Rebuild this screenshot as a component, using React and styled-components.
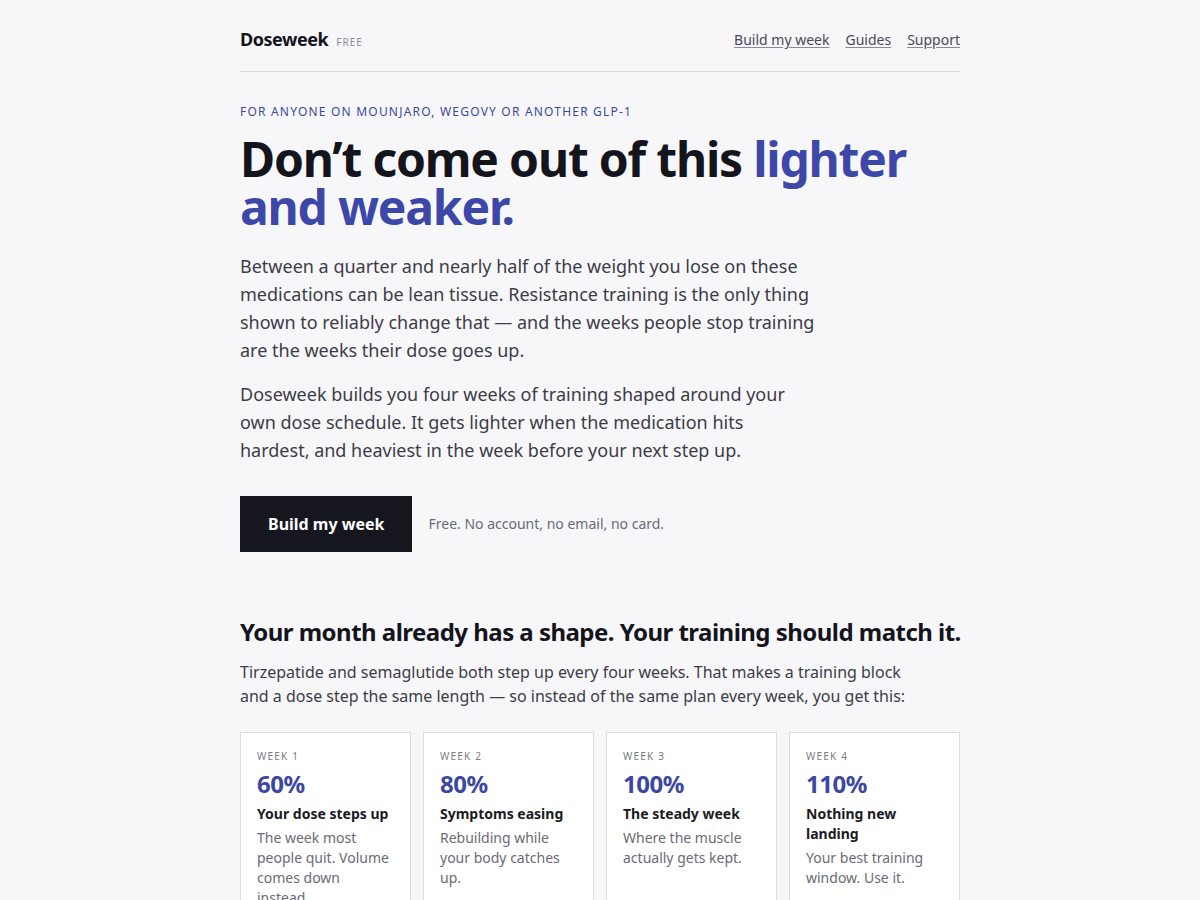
import React from "react";
import styled, { createGlobalStyle } from "styled-components";

const Global = createGlobalStyle`
  * { box-sizing: border-box; }
  html, body { margin: 0; padding: 0; background: #f7f7fa; }
  body { font-family: "Noto Sans", "Open Sans", sans-serif; color: #14151c; -webkit-font-smoothing: antialiased; }
`;

const Page = styled.div`
  width: 720px;
  margin: 0 auto;
`;

const Header = styled.header`
  display: flex;
  align-items: center;
  justify-content: space-between;
  height: 72px;
  padding-top: 6px;
  border-bottom: 1px solid #d8d8dd;
`;

const Brand = styled.div`
  display: flex;
  align-items: baseline;
  gap: 8px;
`;

const Logo = styled.span`
  font-size: 18px;
  font-weight: 700;
  letter-spacing: -0.025em;
  color: #14151c;
`;

const Tag = styled.span`
  font-size: 10px;
  letter-spacing: 0.1em;
  color: #8a8a94;
`;

const Nav = styled.nav`
  display: flex;
  gap: 16px;
  padding-top: 2px;
`;

const NavLink = styled.a`
  font-size: 14px;
  color: #4a4a55;
  text-decoration: underline;
  text-underline-offset: 2px;
  text-decoration-color: #8a8a94;
`;

const Hero = styled.section`
  padding-top: 31px;
`;

const Eyebrow = styled.div`
  font-size: 12px;
  letter-spacing: 0.1em;
  color: #3d47a0;
  line-height: 18px;
  text-transform: uppercase;
`;

const Title = styled.h1`
  margin: 14px 0 0;
  font-size: 48px;
  line-height: 48px;
  font-weight: 700;
  letter-spacing: -0.025em;
  color: #14151c;
`;

const Accent = styled.span`
  color: #3d47a8;
`;

const Lead = styled.p`
  margin: 21px 0 0;
  max-width: 576px;
  font-size: 18px;
  line-height: 28px;
  color: #3c3c46;
  & + & { margin-top: 16px; }
`;

const Cta = styled.div`
  display: flex;
  align-items: center;
  gap: 16px;
  margin-top: 32px;
`;

const Button = styled.a`
  display: inline-flex;
  align-items: center;
  height: 56px;
  padding: 0 28px;
  background: #15161e;
  color: #fff;
  font-size: 16px;
  font-weight: 700;
  text-decoration: none;
`;

const Note = styled.span`
  font-size: 14px;
  color: #6b6b75;
  padding-bottom: 2px;
`;

const Section = styled.section`
  margin-top: 64px;
`;

const H2 = styled.h2`
  margin: 0;
  font-size: 24px;
  line-height: 32px;
  font-weight: 700;
  letter-spacing: -0.022em;
  color: #14151c;
  white-space: nowrap;
`;

const SectionText = styled.p`
  margin: 12px 0 0;
  max-width: 680px;
  font-size: 16px;
  line-height: 24px;
  color: #3c3c46;
`;

const Grid = styled.div`
  display: grid;
  grid-template-columns: repeat(4, 1fr);
  gap: 12px;
  margin-top: 24px;
`;

const Card = styled.div`
  background: #fff;
  border: 1px solid #dcdce1;
  padding: 16px 16px 20px;
  min-height: 200px;
`;

const Week = styled.div`
  font-size: 10px;
  letter-spacing: 0.12em;
  line-height: 14px;
  color: #7a7a84;
`;

const Pct = styled.div`
  margin-top: 6px;
  font-size: 24px;
  line-height: 30px;
  font-weight: 700;
  letter-spacing: -0.02em;
  color: #3d47a0;
`;

const CardTitle = styled.div`
  margin-top: 5px;
  font-size: 14px;
  line-height: 20px;
  font-weight: 700;
  color: #1a1b22;
`;

const CardText = styled.div`
  margin-top: 4px;
  font-size: 14px;
  line-height: 20px;
  color: #6b6b75;
`;

const weeks = [
  { w: "WEEK 1", p: "60%", t: "Your dose steps up", d: "The week most people quit. Volume comes down instead." },
  { w: "WEEK 2", p: "80%", t: "Symptoms easing", d: "Rebuilding while your body catches up." },
  { w: "WEEK 3", p: "100%", t: "The steady week", d: "Where the muscle actually gets kept." },
  { w: "WEEK 4", p: "110%", t: "Nothing new landing", d: "Your best training window. Use it." },
];

export default function App() {
  return (
    <>
      <Global />
      <Page>
        <Header>
          <Brand>
            <Logo>Doseweek</Logo>
            <Tag>FREE</Tag>
          </Brand>
          <Nav>
            <NavLink href="#">Build my week</NavLink>
            <NavLink href="#">Guides</NavLink>
            <NavLink href="#">Support</NavLink>
          </Nav>
        </Header>
        <Hero>
          <Eyebrow>For anyone on Mounjaro, Wegovy or another GLP-1</Eyebrow>
          <Title>
            Don’t come out of this <Accent>lighter and weaker.</Accent>
          </Title>
          <Lead>
            Between a quarter and nearly half of the weight you lose on these medications can be lean
            tissue. Resistance training is the only thing shown to reliably change that — and the weeks
            people stop training are the weeks their dose goes up.
          </Lead>
          <Lead>
            Doseweek builds you four weeks of training shaped around your own dose schedule. It gets
            lighter when the medication hits hardest, and heaviest in the week before your next step up.
          </Lead>
          <Cta>
            <Button href="#">Build my week</Button>
            <Note>Free. No account, no email, no card.</Note>
          </Cta>
        </Hero>
        <Section>
          <H2>Your month already has a shape. Your training should match it.</H2>
          <SectionText>
            Tirzepatide and semaglutide both step up every four weeks. That makes a training block and a
            dose step the same length — so instead of the same plan every week, you get this:
          </SectionText>
          <Grid>
            {weeks.map((x) => (
              <Card key={x.w}>
                <Week>{x.w}</Week>
                <Pct>{x.p}</Pct>
                <CardTitle>{x.t}</CardTitle>
                <CardText>{x.d}</CardText>
              </Card>
            ))}
          </Grid>
        </Section>
      </Page>
    </>
  );
}
